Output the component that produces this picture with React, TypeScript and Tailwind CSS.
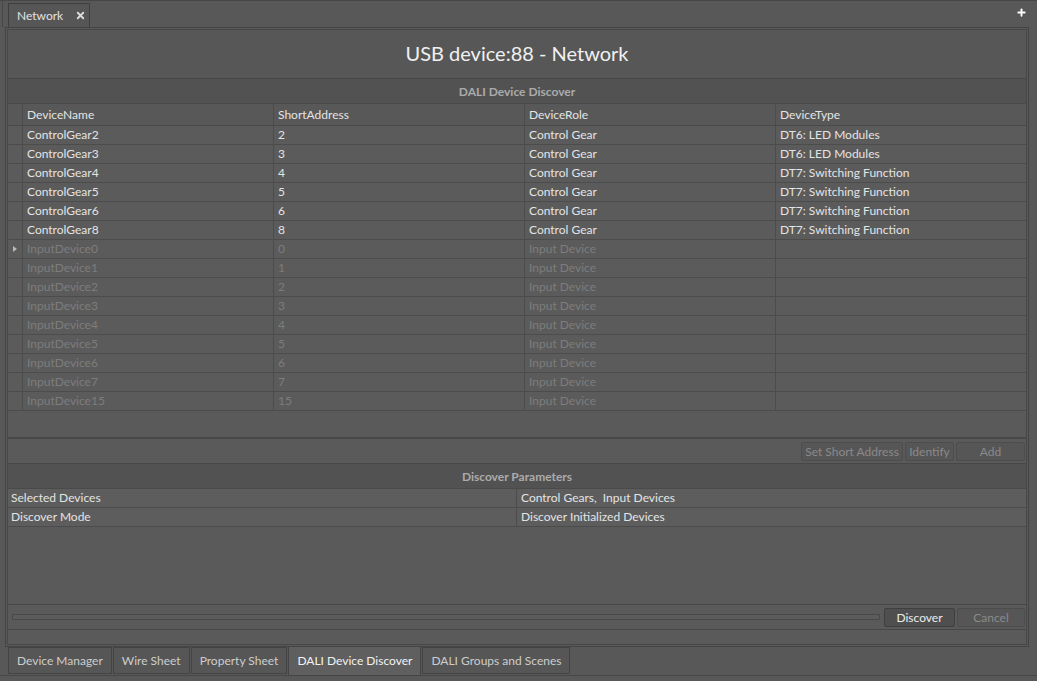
import { X, Plus } from "lucide-react";

const gears = [
  ["ControlGear2", "2", "Control Gear", "DT6: LED Modules"],
  ["ControlGear3", "3", "Control Gear", "DT6: LED Modules"],
  ["ControlGear4", "4", "Control Gear", "DT7: Switching Function"],
  ["ControlGear5", "5", "Control Gear", "DT7: Switching Function"],
  ["ControlGear6", "6", "Control Gear", "DT7: Switching Function"],
  ["ControlGear8", "8", "Control Gear", "DT7: Switching Function"],
];

const inputs = [0, 1, 2, 3, 4, 5, 6, 7, 15];

const columns = ["DeviceName", "ShortAddress", "DeviceRole", "DeviceType"];

const bottomTabs = ["Device Manager", "Wire Sheet", "Property Sheet", "DALI Device Discover", "DALI Groups and Scenes"];

const grid = "grid grid-cols-[15px_251px_251px_251px_1fr]";

function Row({ cells, dim, marker }: { cells: string[]; dim?: boolean; marker?: boolean }) {
  return (
    <div className={`${grid} h-[19px] bg-[#5b5b5b] border-b border-[#4c4c4c]`}>
      <div className="border-r border-[#4c4c4c] flex items-center pl-[5px]">
        {marker && <div className="w-0 h-0 border-y-[3px] border-y-transparent border-l-[4px] border-l-[#b8b8b8]" />}
      </div>
      {cells.map((c, i) => (
        <div
          key={i}
          className={`pl-[4px] flex items-center text-[12px] leading-none border-[#4c4c4c] ${i < 3 ? "border-r" : ""} ${
            dim ? "text-[#7d7d7d]" : "text-[#e4e4e4]"
          }`}
        >
          {c}
        </div>
      ))}
    </div>
  );
}

function Btn({ label, w, on }: { label: string; w: string; on?: boolean }) {
  return (
    <div
      className={`${w} h-[19px] rounded-[2px] border flex items-center justify-center text-[12px] leading-none pt-px ${
        on ? "border-[#3f3f3f] bg-[#4f4f4f] text-[#ececec]" : "border-[#4d4d4d] bg-[#565656] text-[#8a8a8a]"
      }`}
    >
      {label}
    </div>
  );
}

export default function App() {
  return (
    <div className="w-[1037px] h-[681px] overflow-hidden bg-[#585858] font-['Lato',sans-serif] flex flex-col border-t border-[#464646]">
      {/* document tab strip */}
      <div className="h-[26px] flex items-end justify-between pl-[5px] pr-[10px] border-l border-[#474747] ml-[2px]">
        <div className="h-[24px] w-[82px] border border-b-0 border-[#3f3f3f] bg-[#565656] flex items-center pl-[8px] gap-[12px]">
          <span className="text-[12px] text-[#e2e2e2]">Network</span>
          <X size={11} strokeWidth={4} className="text-[#dcdcdc]" />
        </div>
        <Plus size={11} strokeWidth={4} className="text-white mb-[9px]" />
      </div>

      <div className="ml-[5px] w-[1024px] h-[620px] border border-[#434343] bg-[#5a5a5a] p-px flex flex-col">
        <div className="h-[50px] border border-[#474747] bg-[#575757] flex items-center justify-center">
          <span className="text-[20px] text-[#f0f0f0] -mt-[2px]">USB device:88 - Network</span>
        </div>

        {/* discovered devices */}
        <div className="border-x border-[#474747] flex flex-col">
          <div className="h-[25px] bg-[#525252] border-b border-[#4a4a4a] flex items-center justify-center pt-px text-[12px] font-bold text-[#ababab]">
            DALI Device Discover
          </div>
          <div className={`${grid} h-[22px] bg-[#585858] border-b border-[#4a4a4a]`}>
            <div className="border-r border-[#4c4c4c]" />
            {columns.map((c, i) => (
              <div
                key={c}
                className={`pl-[4px] flex items-center text-[12px] text-[#e4e4e4] border-[#4c4c4c] ${i < 3 ? "border-r" : ""}`}
              >
                {c}
              </div>
            ))}
          </div>
          {gears.map((g) => (
            <Row key={g[0]} cells={g} />
          ))}
          {inputs.map((n, i) => (
            <Row key={n} cells={[`InputDevice${n}`, `${n}`, "Input Device", ""]} dim marker={i === 0} />
          ))}
          <div className="h-[28px] bg-[#5a5a5a] border-b-2 border-[#474747]" />
          <div className="h-[25px] flex items-center justify-end gap-[2px] pr-[1px] border-b border-[#474747]">
            <Btn label="Set Short Address" w="w-[102px]" />
            <Btn label="Identify" w="w-[49px]" />
            <Btn label="Add" w="w-[69px]" />
          </div>
        </div>

        {/* discover parameters */}
        <div className="border-x border-[#474747] flex flex-col">
          <div className="h-[25px] bg-[#525252] border-b border-[#4a4a4a] flex items-center justify-center pt-px text-[12px] font-bold text-[#ababab]">
            Discover Parameters
          </div>
          {[
            ["Selected Devices", "Control Gears,  Input Devices"],
            ["Discover Mode", "Discover Initialized Devices"],
          ].map(([k, v]) => (
            <div key={k} className="h-[19px] grid grid-cols-[509px_1fr] bg-[#5d5d5d] border-b border-[#4c4c4c] text-[12px] text-[#e4e4e4]">
              <div className="pl-[3px] flex items-center border-r border-[#4c4c4c]">{k}</div>
              <div className="pl-[4px] flex items-center whitespace-pre">{v}</div>
            </div>
          ))}
          <div className="h-[78px] border-b border-[#474747]" />
        </div>

        <div className="h-[25px] border-x border-b border-[#474747] flex items-center gap-[4px] pl-[4px] pr-[1px]">
          <div className="flex-1 h-[6px] border border-[#484848] bg-[#5c5c5c] rounded-[1px]" />
          <div className="flex gap-[2px]">
            <Btn label="Discover" w="w-[71px]" on />
            <Btn label="Cancel" w="w-[68px]" />
          </div>
        </div>
        <div className="flex-1 border-x border-b border-[#474747]" />
      </div>

      {/* view tabs */}
      <div className="h-[29px] flex items-start gap-px pl-[8px] border-b border-[#474747]">
        {bottomTabs.map((t) => {
          const active = t === "DALI Device Discover";
          return (
            <div
              key={t}
              className={`px-[8px] flex items-center border border-[#444] text-[12px] ${
                active ? "h-[29px] bg-[#5f5f5f] text-[#f2f2f2] border-t-0" : "h-[27px] bg-[#565656] text-[#cdcdcd]"
              }`}
            >
              {t}
            </div>
          );
        })}
      </div>
    </div>
  );
}
